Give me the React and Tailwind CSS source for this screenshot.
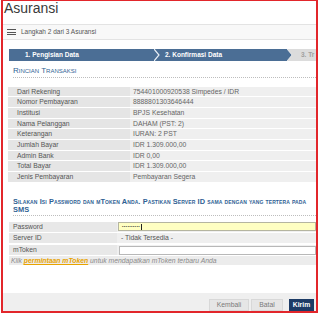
import React from 'react';

const rincian = [
  ['Dari Rekening', '754401000920538 Simpedes / IDR'],
  ['Nomor Pembayaran', '8888801303646444'],
  ['Institusi', 'BPJS Kesehatan'],
  ['Nama Pelanggan', 'DAHAM (PST: 2)'],
  ['Keterangan', 'IURAN: 2 PST'],
  ['Jumlah Bayar', 'IDR 1.309.000,00'],
  ['Admin Bank', 'IDR 0,00'],
  ['Total Bayar', 'IDR 1.309.000,00'],
  ['Jenis Pembayaran', 'Pembayaran Segera'],
];

const font = { fontFamily: '"Liberation Sans", Arial, sans-serif' };

const App = () => {
  return (
    <div className="w-[320px] h-[314px] bg-white overflow-hidden" style={font}>
      <div className="ml-[1px] w-[317px] h-[313px] border-2 border-t border-[#e2262b] flex flex-col">
        {/* Judul */}
        <div className="h-[23px] pl-[1px] text-[14px] leading-[14px] text-[#3a3a3a]">Asuransi</div>

        {/* Header langkah */}
        <div className="h-[16px] flex items-center border-y border-[#e3e3e3] bg-[#f8f8f8]">
          <div className="ml-[4px] w-[9px] flex flex-col gap-[1.5px]">
            <span className="block h-px bg-[#555]"></span>
            <span className="block h-px bg-[#555]"></span>
            <span className="block h-px bg-[#555]"></span>
          </div>
          <span className="ml-[5px] text-[6.5px] text-[#555]">Langkah 2 dari 3 Asuransi</span>
        </div>

        {/* Progress step */}
        <div className="mt-[9px] ml-[6px] h-[12px] flex text-[6.5px] font-bold leading-[12px]">
          <div className="w-[145px] bg-[#4b6e95] text-white pl-[16px]">1. Pengisian Data</div>
          <svg width="6" height="12" viewBox="0 0 6 12" className="block bg-[#4b6e95]">
            <polyline points="0,0 5,6 0,12" fill="none" stroke="#e8eef5" strokeWidth="1.2" />
          </svg>
          <div className="w-[127px] bg-[#4b6e95] text-white pl-[5px]">2. Konfirmasi Data</div>
          <svg width="6" height="12" viewBox="0 0 6 12" className="block bg-[#dcdcdc]">
            <polygon points="0,0 5,6 0,12" fill="#4b6e95" />
            <polyline points="0,0 5,6 0,12" fill="none" stroke="#f2f2f2" strokeWidth="0.8" />
          </svg>
          <div className="flex-1 bg-[#dcdcdc] text-[#a0a0a0] pl-[8px] whitespace-nowrap overflow-hidden">3. Tr</div>
        </div>

        {/* Rincian transaksi */}
        <div className="mt-[6px] ml-[10px] pb-[1.5px] border-b border-dotted border-[#bdbdbd] text-[8px] leading-[8px] text-[#2f5f94] [font-variant:small-caps]">
          Rincian Transaksi
        </div>

        <div className="mt-[9px] ml-[5px] flex flex-col gap-[1px]">
          {rincian.map(([label, value]) => (
            <div key={label} className="h-[9.7px] flex text-[6.8px] leading-[9.7px]">
              <div className="w-[122px] bg-[#e5e5e5] text-[#555] pl-[9px]">{label}</div>
              <div className="flex-1 bg-[#efefef] text-[#666] pl-[3px] whitespace-nowrap">{value}</div>
            </div>
          ))}
        </div>

        {/* Instruksi */}
        <div className="mt-[16px] ml-[10px] pb-[1px] border-b border-dotted border-[#bdbdbd] text-[7.4px] leading-[8px] text-[#2f5f94] font-bold tracking-[0.1px] [font-variant:small-caps]">
          Silakan Isi Password dan mToken Anda. Pastikan Server ID sama dengan yang tertera pada<br />SMS
        </div>

        <div className="mt-[6px] ml-[6px] flex flex-col gap-[1.5px] text-[6.8px]">
          <div className="h-[10px] flex">
            <div className="w-[108px] bg-[#e8e8e8] text-[#555] pl-[4px] leading-[10px]">Password</div>
            <div className="flex-1 pl-[1px] bg-[#f0f0f0]">
              <div className="h-[9px] mt-[0.5px] bg-[#ffffc2] border border-[#b5b5a0] flex items-center pl-[3px] text-[#333] text-[4px] leading-[5px] tracking-[0.4px]">
                ••••••••••<span className="ml-[1px] inline-block w-px h-[6px] bg-[#222]"></span>
              </div>
            </div>
          </div>
          <div className="h-[10px] flex leading-[10px]">
            <div className="w-[108px] bg-[#e8e8e8] text-[#555] pl-[4px]">Server ID</div>
            <div className="flex-1 bg-[#efefef] text-[#555] pl-[4px]">- Tidak Tersedia -</div>
          </div>
          <div className="h-[10px] flex">
            <div className="w-[108px] bg-[#e8e8e8] text-[#555] pl-[4px] leading-[10px]">mToken</div>
            <div className="flex-1 pl-[2px] bg-[#f0f0f0]">
              <div className="h-[9px] mt-[1px] bg-white border border-[#b8b8b8]"></div>
            </div>
          </div>
          <div className="h-[9px] flex items-center bg-[#ececec] pl-[2px] italic text-[#8a8a8a] leading-[9px] whitespace-nowrap">
            Klik&nbsp;
            <span className="font-bold text-[#e8a300] underline">permintaan mToken</span>
            &nbsp;untuk mendapatkan mToken terbaru Anda
          </div>
        </div>

        {/* Tombol */}
        <div className="mt-auto h-[18px] bg-[#efefef] flex items-end justify-end pr-[2px] gap-[2px] text-[6.8px]">
          <button className="w-[40px] h-[12px] bg-[#e6e6e6] border border-[#d8d8d8] text-[#7a7a7a] leading-[10px]">Kembali</button>
          <button className="w-[32px] h-[12px] bg-[#e6e6e6] border border-[#d8d8d8] text-[#7a7a7a] leading-[10px] mr-[4px]">Batal</button>
          <button className="w-[25px] h-[12px] bg-[#1d3b66] text-white font-bold leading-[12px]">Kirim</button>
        </div>
      </div>
    </div>
  );
};

export default App;
